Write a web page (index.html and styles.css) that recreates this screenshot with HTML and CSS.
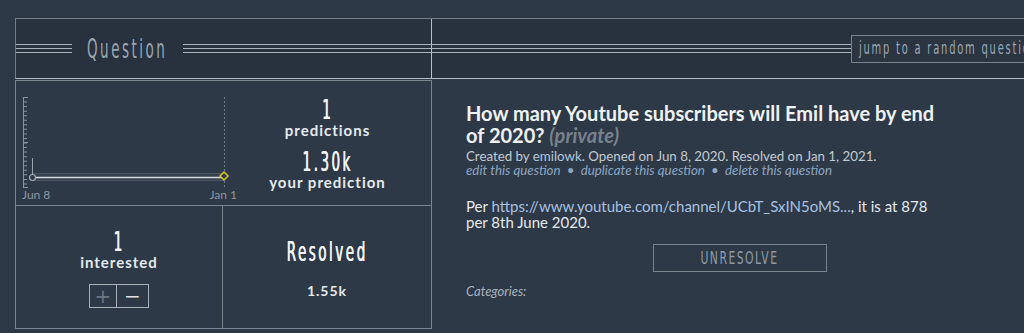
FILE: index.html
```html
<!DOCTYPE html>
<html lang="en">
<head>
  <meta charset="UTF-8">
  <title>Question</title>
  <link rel="stylesheet" href="styles.css">
</head>
<body>
  <div class="page">
    <header class="head">
      <div class="head-left">
        <span class="rule short"></span>
        <h2 class="title"><span>Question</span></h2>
        <span class="rule"></span>
      </div>
      <div class="head-right">
        <span class="rule"></span>
        <a class="jump" href="#"><span>jump to a random question</span></a>
      </div>
    </header>

    <div class="main">
      <div class="panel">
        <div class="row top">
          <div class="chart">
            <svg width="208" height="124" viewBox="0 0 208 124">
              <line x1="7.5" y1="16" x2="7.5" y2="107" stroke="#8a939c"/>
              <line x1="9.5" y1="16" x2="9.5" y2="107" stroke="#8a939c" stroke-width="3" stroke-dasharray="1 3.55"/>
              <path d="M7 16.5h5 M7 61.5h5 M7 106.5h5" stroke="#8a939c"/>
              <line x1="208.5" y1="16" x2="208.5" y2="107" stroke="#6f7984" stroke-dasharray="2 2"/>
              <rect x="16" y="92.5" width="192" height="7" fill="#35414e" stroke="#4b5663"/>
              <line x1="16" y1="96.5" x2="208" y2="96.5" stroke="#d9dee3" stroke-width="1.5"/>
              <line x1="16.5" y1="77" x2="16.5" y2="94" stroke="#9aa3ac"/>
              <circle cx="16.5" cy="96.5" r="3" fill="#2d3947" stroke="#a3acb5" stroke-width="1.2"/>
              <polygon points="208,91 212,95 208,99 204,95" fill="#2d3947" stroke="#d9c52b" stroke-width="1.5"/>
              <text x="6" y="118" class="axis-label">Jun 8</text>
              <text x="221" y="118" class="axis-label" text-anchor="end">Jan 1</text>
            </svg>
          </div>
          <div class="stat">
            <div class="big"><span>1</span></div>
            <div class="label">predictions</div>
            <div class="big"><span>1.30k</span></div>
            <div class="label">your prediction</div>
          </div>
        </div>
        <div class="row bottom">
          <div class="cell interest">
            <div class="big"><span>1</span></div>
            <div class="label">interested</div>
            <div class="vote">
              <span class="plus">+</span>
              <span class="minus">&minus;</span>
            </div>
          </div>
          <div class="cell resolved">
            <div class="big"><span>Resolved</span></div>
            <div class="value">1.55k</div>
          </div>
        </div>
      </div>

      <div class="detail">
        <h1>How many Youtube subscribers will Emil have by end of 2020? <em>(private)</em></h1>
        <div class="meta">
          Created by <a href="#">emilowk</a>. Opened on Jun 8, 2020. Resolved on Jan 1, 2021.<br>
          <span class="links"><a href="#">edit this question</a> &nbsp;&bull;&nbsp; <a href="#">duplicate this question</a> &nbsp;&bull;&nbsp; <a href="#">delete this question</a></span>
        </div>
        <p class="desc">Per <a href="#">https://www.youtube.com/channel/UCbT_SxIN5oMS...</a>, it is at 878 per 8th June 2020.</p>
        <div class="actions"><a class="btn" href="#"><span>UNRESOLVE</span></a></div>
        <div class="cats">Categories:</div>
      </div>
    </div>
  </div>
</body>
</html>
```

FILE: styles.css
```css
html, body { margin: 0; padding: 0; overflow: hidden; }
body { background-color: #2d3947; color: #e4e9ee; font-family: Lato, "Open Sans", sans-serif; }
a { text-decoration: none; }

.page { margin: 18px 0 0 15px; width: 1032px; }

/* header strip */
.head {
  display: flex;
  height: 59px;
  border: 1px solid #737c86;
  border-right: none;
  border-bottom-color: #b7bec5;
  background-color: #28323e;
}
.head-left {
  width: 415px;
  display: flex;
  align-items: center;
  border-right: 1px solid #b7bec5;
}
.head-right { flex: 1; display: flex; align-items: center; }
.rule {
  flex: 1;
  height: 9px;
  background: linear-gradient(#aab2ba 0 1px, transparent 1px 4px, #aab2ba 4px 5px, transparent 5px 8px, #aab2ba 8px 9px);
}
.rule.short { flex: 0 0 56px; }

/* tall condensed display lettering */
.title, .jump span, .big span, .btn span {
  font-family: "Liberation Sans Narrow", "DejaVu Sans Condensed", "Liberation Sans", sans-serif;
  font-weight: normal;
}
.title span, .jump span, .big span, .btn span { display: inline-block; transform: scaleY(1.75); }
.title { margin: 0 16px 0 15px; font-size: 15px; letter-spacing: 2.5px; color: #9aa7b3; }

.jump {
  box-sizing: border-box;
  display: flex;
  align-items: center;
  width: 196px;
  height: 28px;
  padding: 0 7px;
  border: 1px solid #7a838c;
  border-right: none;
  background-color: #2b3542;
  color: #9aa7b3;
  font-size: 11px;
  letter-spacing: 1.8px;
  white-space: nowrap;
}
.jump span { transform: scaleY(1.6); }

/* left panel */
.main { display: flex; align-items: flex-start; }
.panel {
  box-sizing: border-box;
  width: 417px;
  margin-top: 1px;
  border: 1px solid #7a838c;
}
.row { display: grid; }
.row.top { grid-template-columns: 208px 1fr; height: 124px; border-bottom: 1px solid #7a838c; }
.row.bottom { grid-template-columns: 207px 1fr; height: 122px; }
.chart svg { display: block; overflow: visible; }
.axis-label { font-family: Lato, sans-serif; font-size: 12px; fill: #8d97a1; }

.stat, .cell { display: flex; flex-direction: column; align-items: center; }
.stat { padding-top: 17px; }
.cell.interest { border-right: 1px solid #7a838c; padding-top: 24px; }
.cell.resolved { padding-top: 34px; }

.big { font-size: 15px; line-height: 22px; letter-spacing: 2.5px; color: #f2f4f6; }
.big span { text-shadow: 0.5px 0 0 #f2f4f6; }
.label { font-size: 15px; font-weight: bold; letter-spacing: 1px; line-height: 18px; color: #e4e9ee; }
.stat .label { margin-bottom: 11px; }
.value { margin-top: 19px; font-size: 14px; font-weight: bold; letter-spacing: 1px; color: #e4e9ee; }

.vote { display: flex; margin-top: 13px; border: 1px solid #a9b0b7; }
.vote span { display: flex; align-items: center; justify-content: center; height: 22px; font-size: 20px; font-family: "DejaVu Sans", sans-serif; }
.vote .plus { width: 26px; color: #6c7682; border-right: 1px solid #a9b0b7; }
.vote .minus { width: 31px; color: #e0e4e8; }

/* question detail */
.detail { flex: 1; padding: 23px 34px 0; }
.detail h1, .meta, .desc { max-width: 480px; }
.detail h1 { margin: 0; font-size: 20px; line-height: 22px; font-weight: bold; color: #eef2f5; }
.detail h1 em { color: #78828d; font-weight: bold; }
.meta { margin-top: 3px; font-size: 13.3px; line-height: 14px; color: #c3cbd3; }
.meta a { color: #b4c6dc; }
.links { font-style: italic; }
.links, .links a { color: #8ea5c2; }
.desc { margin: 21px 0 0; font-size: 15px; line-height: 16px; color: #e4e9ee; }
.desc a { color: #a8c1e0; }
.actions { display: flex; justify-content: center; margin-top: 14px; }
.btn {
  display: flex;
  align-items: center;
  justify-content: center;
  width: 172px;
  height: 26px;
  border: 1px solid #7a838c;
  color: #8f9aa5;
  font-size: 12px;
  letter-spacing: 1.5px;
}
.btn span { transform: scaleY(1.45); }
.cats { margin-top: 11px; font-size: 13px; font-style: italic; color: #aab3bc; }
```
